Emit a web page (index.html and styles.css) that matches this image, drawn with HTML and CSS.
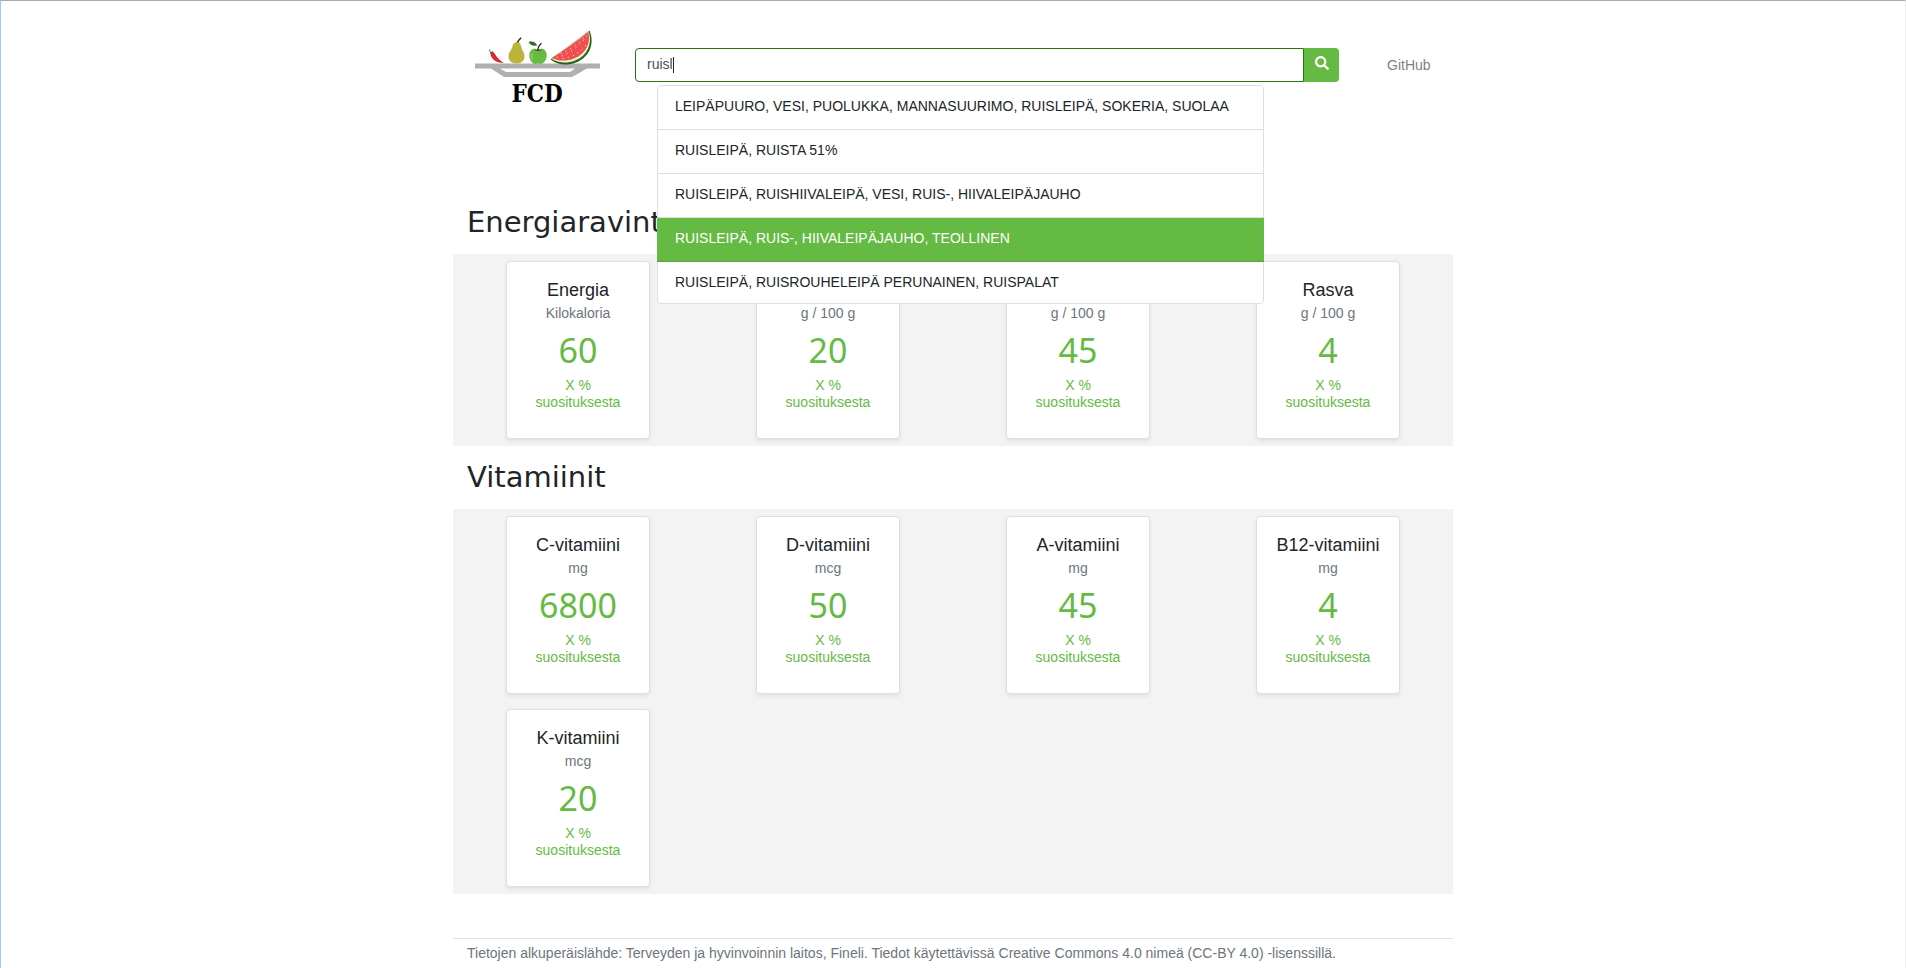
FILE: index.html
```html
<!DOCTYPE html>
<html lang="fi">
<head>
<meta charset="utf-8">
<meta name="viewport" content="width=device-width, initial-scale=1">
<title>FCD</title>
<link rel="stylesheet" href="styles.css">
</head>
<body>
<div class="container">
  <header class="header">
    <a class="logo" href="#" aria-label="FCD">
      <svg viewBox="0 0 126 78" width="126" height="78" aria-hidden="true">
        <!-- plate -->
        <path d="M0 34.500h125v5H112L97 48H29L16 39.500H0z" fill="#b0b0b0"/>
        <path d="M25 39.500h75l-5 3.500H31z" fill="#fff"/>
        <!-- chilli -->
        <g transform="translate(0 3)">
          <path d="M15.500 20.500c2-1.300 3.500-.2 5 2.500 1.800 3 4.600 5.800 8.300 7.800-4.500.3-8.700-1-11-4-1.500-2-2.600-4.300-2.300-6.300z" fill="#d8181e"/>
          <path d="M17.500 22.500c1.200 2.600 3.200 4.800 6 6.300" fill="none" stroke="#f47a70" stroke-width=".6"/>
          <path d="M15 20.500l3.400-.6M15.500 20c-1.200-.8-1.200-1.800-.5-2.500" stroke="#2d6b1d" stroke-width="1" fill="none"/>
        </g>
        <!-- pear -->
        <g transform="translate(0 2)">
          <path d="M41.500 11c2.300-.3 4.300 1.700 4.800 4.700.5 3.700 3.200 5 3.200 9.600 0 4.700-3 7.200-8 7.200s-8-2.500-8-7.200c0-4.600 3.200-6 3.800-9.600.5-3 2-4.500 4.200-4.700z" fill="#bdb33d"/>
          <path d="M42.500 11.500c.3-1.500 1.200-2.500 3.700-4.800" fill="none" stroke="#3d2a1a" stroke-width="1.500"/>
        </g>
        <!-- apple -->
        <g transform="translate(0 2)">
          <path d="M63 18.500c3-1.600 8.700-1 8.700 6 0 4.700-3.200 8.500-6.200 8.500-1.200 0-1.500-.6-2.500-.6s-1.500.6-2.700.6c-3 0-5.900-3.800-5.900-8.500 0-7 5.600-7.500 8.600-6z" fill="#67bb42"/>
          <path d="M59.500 18.500c2 1.600 5.500 1.600 7.500 0" fill="none" stroke="#2f6f22" stroke-width=".9"/>
          <path d="M57.500 22.500c-1.200 2-.8 4.500.2 6.200" fill="none" stroke="#a9dc90" stroke-width=".9"/>
          <path d="M63 20c-.2-3.500 1-5.800 3.500-7.700" fill="none" stroke="#4b2622" stroke-width="1.400"/>
          <path d="M53.500 11c3.500-1.200 7.200-.2 8.700 3.500-3.600.8-6.500.2-8.700-3.500z" fill="#2f6f22"/>
        </g>
        <!-- watermelon -->
        <g transform="translate(0 5)">
          <path d="M114.500-3.500C120 10 114.500 23 101 28.500c-9 3.500-18.500 2.700-25.500-3z" fill="#2a6316"/>
          <path d="M113.800-2.800C117.500 10 112.500 21.500 100 26.500c-8.500 3.300-17 2.400-23.500-1.800z" fill="#eaf3d0"/>
          <path d="M113.400-2.300C115.800 9 111.500 19.500 99 24.500c-8 3-15.500 2.500-22.500-.6 10-5.500 27.500-18.200 36.900-26.200z" fill="#f04f4f"/>
          <g stroke="#ffd9d4" stroke-width="1" stroke-linecap="round" stroke-dasharray=".5 4.800" fill="none">
            <path d="M82 23.500c11-3 23-11 30-22"/>
            <path d="M88 24.500c10-1.500 18-6 24-15"/>
            <path d="M86 19.500c9-4 18-10 24-17"/>
          </g>
        </g>
        <text class="logo-text" x="62" y="73" text-anchor="middle">FCD</text>
      </svg>
    </a>
    <form class="search" role="search">
      <div class="search-bar">
        <input class="search-input" type="text" value="ruisl" aria-label="Haku" autocomplete="off" spellcheck="false">
        <span class="caret"></span>
        <button class="search-button" type="button" aria-label="Hae">
          <svg viewBox="0 0 512 512" width="14" height="14" aria-hidden="true"><path fill="currentColor" d="M505 442.700L405.300 343c-4.500-4.500-10.600-7-17-7H372c27.600-35.300 44-79.700 44-128C416 93.100 322.900 0 208 0S0 93.100 0 208s93.100 208 208 208c48.300 0 92.700-16.400 128-44v16.300c0 6.400 2.500 12.500 7 17l99.700 99.700c9.400 9.400 24.600 9.400 33.900 0l28.300-28.300c9.400-9.400 9.400-24.600.1-34zM208 336c-70.700 0-128-57.200-128-128 0-70.700 57.200-128 128-128 70.700 0 128 57.200 128 128 0 70.700-57.200 128-128 128z"/></svg>
        </button>
      </div>
      <ul class="suggestions">
        <li><button class="suggestion" type="button">LEIPÄPUURO, VESI, PUOLUKKA, MANNASUURIMO, RUISLEIPÄ, SOKERIA, SUOLAA</button></li>
        <li><button class="suggestion" type="button">RUISLEIPÄ, RUISTA 51%</button></li>
        <li><button class="suggestion" type="button">RUISLEIPÄ, RUISHIIVALEIPÄ, VESI, RUIS-, HIIVALEIPÄJAUHO</button></li>
        <li><button class="suggestion active" type="button">RUISLEIPÄ, RUIS-, HIIVALEIPÄJAUHO, TEOLLINEN</button></li>
        <li><button class="suggestion" type="button">RUISLEIPÄ, RUISROUHELEIPÄ PERUNAINEN, RUISPALAT</button></li>
      </ul>
    </form>
    <a class="nav-link" href="#">GitHub</a>
  </header>
  <main>
    <section>
      <h2 class="title">Energiaravintoaineet</h2>
      <div class="cards">
        <article class="card"><h3>Energia</h3><p class="unit">Kilokaloria</p><p class="value">60</p><p class="share">X % suosituksesta</p></article>
        <article class="card"><h3>Proteiini</h3><p class="unit">g / 100 g</p><p class="value">20</p><p class="share">X % suosituksesta</p></article>
        <article class="card"><h3>Hiilihydraatti</h3><p class="unit">g / 100 g</p><p class="value">45</p><p class="share">X % suosituksesta</p></article>
        <article class="card"><h3>Rasva</h3><p class="unit">g / 100 g</p><p class="value">4</p><p class="share">X % suosituksesta</p></article>
      </div>
    </section>
    <section>
      <h2 class="title">Vitamiinit</h2>
      <div class="cards">
        <article class="card"><h3>C-vitamiini</h3><p class="unit">mg</p><p class="value">6800</p><p class="share">X % suosituksesta</p></article>
        <article class="card"><h3>D-vitamiini</h3><p class="unit">mcg</p><p class="value">50</p><p class="share">X % suosituksesta</p></article>
        <article class="card"><h3>A-vitamiini</h3><p class="unit">mg</p><p class="value">45</p><p class="share">X % suosituksesta</p></article>
        <article class="card"><h3>B12-vitamiini</h3><p class="unit">mg</p><p class="value">4</p><p class="share">X % suosituksesta</p></article>
        <article class="card"><h3>K-vitamiini</h3><p class="unit">mcg</p><p class="value">20</p><p class="share">X % suosituksesta</p></article>
      </div>
    </section>
  </main>
  <footer class="footer">Tietojen alkuperäislähde: Terveyden ja hyvinvoinnin laitos, Fineli. Tiedot käytettävissä Creative Commons 4.0 nimeä (CC-BY 4.0) -lisenssillä.</footer>
</div>
</body>
</html>
```
FILE: styles.css
```css
*, *::before, *::after { box-sizing: border-box; }

body {
  margin: 0;
  min-height: 100vh;
  border: solid;
  border-width: 1px 1px 0;
  border-color: #a9a9a9 #ebebeb #ebebeb #a0c3ff;
  background: #fff;
  color: #212529;
  font: 14px/21px "Liberation Sans", Arial, sans-serif;
}

h2, h3, p, ul { margin: 0; padding: 0; font-weight: 400; }
ul { list-style: none; }

.container { max-width: 1000px; margin: 0 auto; }

.header {
  display: flex;
  align-items: flex-start;
  min-height: 190px;
  padding: 28px 22px 0;
}

.logo { flex: none; width: 126px; margin-right: 34px; }
.logo svg { display: block; overflow: visible; }
.logo-text { font: bold 24px "DejaVu Serif Condensed", "DejaVu Serif", serif; fill: #000; }

.search { position: relative; flex: 0 1 704px; margin-top: 19px; }
.search-bar { display: flex; position: relative; }

.search-input {
  flex: 1;
  min-width: 0;
  height: 34px;
  padding: 0 11px 2px;
  border: 1px solid #28750c;
  border-radius: 4px 0 0 4px;
  outline: 0;
  background: #fff;
  color: #495057;
  font: inherit;
}
.caret {
  position: absolute;
  top: 9px;
  left: 38px;
  width: 1px;
  height: 16px;
  background: #212529;
}

.search-button {
  width: 35px;
  height: 34px;
  padding: 0 0 4px;
  border: 0;
  border-radius: 0 4px 4px 0;
  background: #65ba43;
  color: #fff;
  line-height: 1;
}
.search-button svg { display: inline-block; vertical-align: middle; }

.suggestions {
  position: absolute;
  top: 37px;
  left: 22px;
  right: 75px;
  z-index: 2;
  border: 1px solid #dfdfdf;
  border-radius: 4px;
  background: #fff;
}
.suggestion {
  display: block;
  width: 100%;
  padding: 10px 17px 12px;
  border: 0;
  border-bottom: 1px solid #dfdfdf;
  border-radius: 4px 4px 0 0;
  background: #fff;
  color: #212529;
  font: inherit;
  text-align: left;
}
.suggestions li:last-child .suggestion {
  padding-bottom: 10px;
  border-bottom: 0;
  border-radius: 0 0 4px 4px;
}
.suggestion.active {
  width: calc(100% + 2px);
  margin: 0 -1px;
  padding-left: 18px;
  border-color: #57a338;
  border-radius: 0;
  background: #65ba43;
  color: #fff;
}

.nav-link { margin: 26px 0 0 48px; color: #7f7f7f; text-decoration: none; }

.title {
  padding: 14px 14px 15px;
  font: 29px/34px "DejaVu Sans", Verdana, sans-serif;
}

.cards {
  display: grid;
  grid-template-columns: repeat(4, 1fr);
  gap: 15px 0;
  padding: 7px 0;
  background: #f3f3f3;
  justify-items: center;
}

.card {
  width: 144px;
  padding: 18px 14px 27px;
  border: 1px solid #dfdfdf;
  border-radius: 4px;
  background: #fff;
  box-shadow: 0 2px 4px rgba(0, 0, 0, .08);
  text-align: center;
}
.card h3 { margin: 0 -8px; font-size: 18px; line-height: 20px; white-space: nowrap; }
.unit { margin-top: 3px; color: #6c757d; }
.value { margin: 5px 0 6px; color: #65ba43; font: 34px/42px "Noto Sans", "Open Sans", sans-serif; }
.share { color: #65ba43; line-height: 17px; }

.footer {
  margin-top: 44px;
  padding: 4px 14px 3px;
  border-top: 1px solid #dee2e6;
  color: #6c757d;
}
```
